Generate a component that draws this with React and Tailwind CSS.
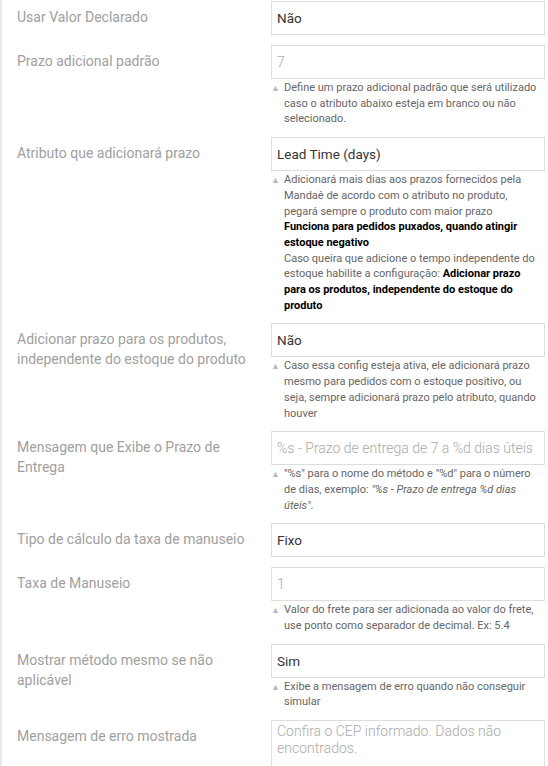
import React from "react";

function Note({ children }) {
    return (
        <div className="mt-[1px] flex pr-[3px] text-[11px] leading-[15.7px] text-[#666]">
            <span className="w-[13px] shrink-0 pt-[1px] text-[9px] text-[#bbb]">▲</span>
            <div className="flex-1">{children}</div>
        </div>
    );
}

function Field({ value, placeholder }) {
    if (placeholder) {
        return (
            <div className="h-[34px] border border-[#ddd] bg-white px-[5px] flex items-center text-[14px] text-[#aaa] font-light whitespace-nowrap overflow-hidden">
                {placeholder}
            </div>
        );
    }
    return (
        <div className="h-[34px] border border-[#ddd] bg-white px-[5px] flex items-center text-[13.5px] text-[#333]">
            {value}
        </div>
    );
}

function Row({ label, children }) {
    return (
        <div className="flex py-[5px]">
            <div className="w-[269px] shrink-0 pl-[15px] pr-[25px] pt-[6px] text-[14px] leading-[20px] text-[#a0a0a0]">
                {label}
            </div>
            <div className="w-[274px] shrink-0">{children}</div>
        </div>
    );
}

export default function App() {
    const b = "font-bold text-black";
    return (
        <div
            className="h-[766px] bg-white border-l-2 border-[#e6e9ef] pt-[1px] overflow-hidden"
            style={{ fontFamily: "Roboto, 'Noto Sans', sans-serif" }}
        >
            <div className="-mt-[5px]">
                <Row label="Usar Valor Declarado">
                    <Field value="Não" />
                </Row>

                <Row label="Prazo adicional padrão">
                    <Field placeholder="7" />
                    <Note>
                        Define um prazo adicional padrão que será utilizado caso o atributo abaixo esteja em branco ou não selecionado.
                    </Note>
                </Row>

                <Row label="Atributo que adicionará prazo">
                    <Field value="Lead Time (days)" />
                    <Note>
                        Adicionará mais dias aos prazos fornecidos pela Mandaê de acordo com o atributo no produto, pegará sempre o produto com maior prazo
                        <br />
                        <span className={b}>Funciona para pedidos puxados, quando atingir estoque negativo</span>
                        <br />
                        Caso queira que adicione o tempo independente do estoque habilite a configuração:{" "}
                        <span className={b}>Adicionar prazo para os produtos, independente do estoque do produto</span>
                    </Note>
                </Row>

                <Row label="Adicionar prazo para os produtos, independente do estoque do produto">
                    <Field value="Não" />
                    <Note>
                        Caso essa config esteja ativa, ele adicionará prazo mesmo para pedidos com o estoque positivo, ou seja, sempre adicionará prazo pelo atributo, quando houver
                    </Note>
                </Row>

                <Row label="Mensagem que Exibe o Prazo de Entrega">
                    <Field placeholder="%s - Prazo de entrega de 7 a %d dias úteis" />
                    <Note>
                        "%s" para o nome do método e "%d" para o número de dias, exemplo: <em>"%s - Prazo de entrega %d dias úteis"</em>.
                    </Note>
                </Row>

                <Row label="Tipo de cálculo da taxa de manuseio">
                    <Field value="Fixo" />
                </Row>

                <Row label="Taxa de Manuseio">
                    <Field placeholder="1" />
                    <Note>
                        Valor do frete para ser adicionada ao valor do frete, use ponto como separador de decimal. Ex: 5.4
                    </Note>
                </Row>

                <Row label="Mostrar método mesmo se não aplicável">
                    <Field value="Sim" />
                    <Note>Exibe a mensagem de erro quando não conseguir simular</Note>
                </Row>

                <Row label="Mensagem de erro mostrada">
                    <div className="h-[80px] border border-[#ddd] bg-white px-[5px] pt-[2px] text-[14px] leading-[17px] text-[#aaa] font-light">
                        Confira o CEP informado. Dados não encontrados.
                    </div>
                </Row>
            </div>
        </div>
    );
}
